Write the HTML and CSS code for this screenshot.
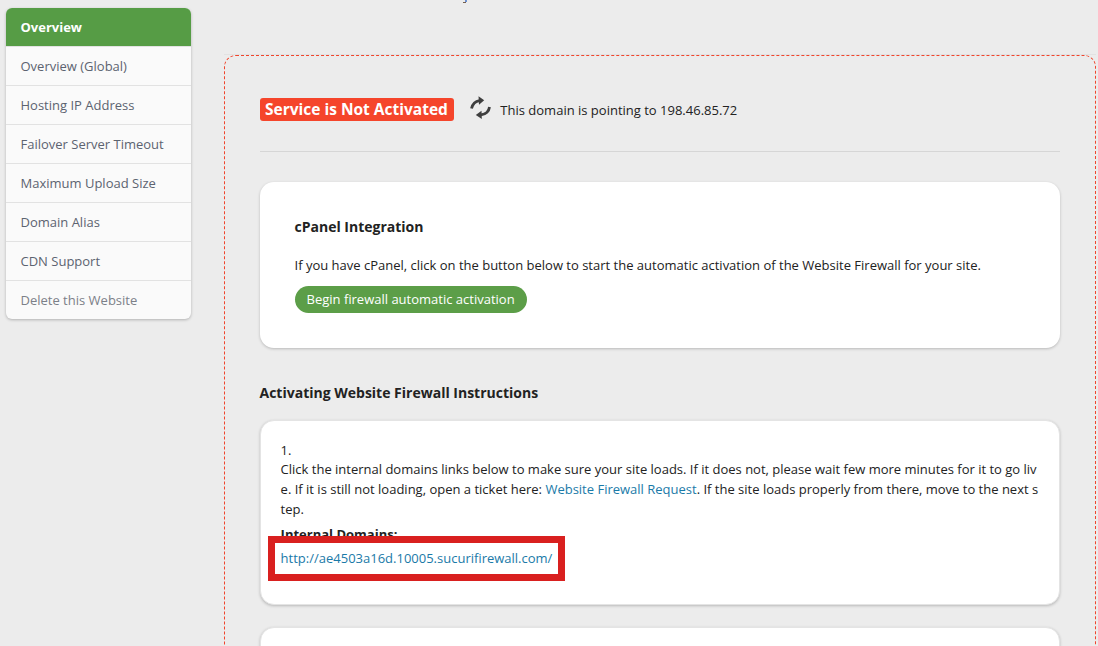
FILE: index.html
```html
<!DOCTYPE html>
<html lang="en">
<head>
<meta charset="utf-8">
<title>Website Firewall</title>
<link rel="stylesheet" href="styles.css">
</head>
<body>
<div class="page">
  <span class="clipped-mark"></span>
  <nav class="side">
    <a class="side-item active">Overview</a>
    <a class="side-item">Overview (Global)</a>
    <a class="side-item">Hosting IP Address</a>
    <a class="side-item">Failover Server Timeout</a>
    <a class="side-item">Maximum Upload Size</a>
    <a class="side-item">Domain Alias</a>
    <a class="side-item">CDN Support</a>
    <a class="side-item muted">Delete this Website</a>
  </nav>
  <main class="panel">
    <div class="status">
      <span class="badge">Service is Not Activated</span>
      <svg class="refresh" viewBox="0 0 34 34" width="34" height="34" aria-hidden="true">
        <path fill="none" stroke="#3f3f3f" stroke-width="2.8" d="M7.500 16.500C8.500 12.500 11 9.200 15.500 8.600"/>
        <path fill="#3f3f3f" d="M14.500 4.300 20.200 8.200 15 12.800z"/>
        <path fill="none" stroke="#3f3f3f" stroke-width="2.8" d="M25.500 15C25 19 22 22.400 17 22.800"/>
        <path fill="#3f3f3f" d="M11.800 23 17.500 18.800 17.800 27z"/>
      </svg>
      <span class="status-text">This domain is pointing to 198.46.85.72</span>
    </div>
    <section class="card cpanel">
      <h3 class="card-title">cPanel Integration</h3>
      <p class="card-text">If you have cPanel, click on the button below to start the automatic activation of the Website Firewall for your site.</p>
      <a class="btn">Begin firewall automatic activation</a>
    </section>
    <h3 class="section-title">Activating Website Firewall Instructions</h3>
    <section class="card step">
      <div class="step-text">1.<br>Click the internal domains links below to make sure your site loads. If it does not, please wait few more minutes for it to go live. If it is still not loading, open a ticket here: <a class="link">Website Firewall Request</a>. If the site loads properly from there, move to the next step.</div>
      <div class="step-label">Internal Domains:</div>
      <a class="link step-url">http://ae4503a16d.10005.sucurifirewall.com/</a>
      <div class="marker"></div>
    </section>
    <section class="card step next"></section>
  </main>
</div>
</body>
</html>
```
FILE: styles.css
```css
* { box-sizing: border-box; }
html, body { margin: 0; height: 100%; overflow: hidden; }
body {
  background: #ececec;
  font-family: "Open Sans", "Liberation Sans", sans-serif;
  font-size: 13px;
  color: #222;
}
.page {
  position: relative;
  display: flex;
  align-items: flex-start;
  padding: 8px 2px 0 6px;
  gap: 33px;
  width: 1098px;
}
.clipped-mark {
  position: absolute;
  left: 463px;
  top: 2px;
  width: 3px;
  height: 1px;
  background: #75604f;
}
.clipped-mark::after {
  content: "";
  position: absolute;
  left: 2px;
  top: -2px;
  width: 2px;
  height: 2px;
  background: #6d8fd0;
}
.side {
  flex: 0 0 185px;
  display: flex;
  flex-direction: column;
  background: #fafafa;
  border-radius: 6px;
  box-shadow: 0 1px 3px rgba(0,0,0,.25);
  overflow: hidden;
}
.side-item {
  height: 39px;
  line-height: 38px;
  padding-left: 14.5px;
  font-size: 13px;
  color: #5c6370;
  border-bottom: 1px solid #e2e2e2;
}
.side-item:last-child { border-bottom: 0; height: 38px; }
.side-item.active {
  background: #569c45;
  color: #fff;
  font-weight: 700;
  border-bottom-color: #e2e2e2;
}
.side-item.muted { color: #7c8088; }
.panel {
  position: relative;
  flex: 1;
  margin-top: 47px;
  height: 700px;
  border: 1px dashed #f0452c;
  border-radius: 12px;
  padding: 0 35px;
}
.panel::before {
  content: "";
  position: absolute;
  left: -1px;
  right: -1px;
  top: -2px;
  height: 1px;
  background: #e2e2e2;
}
.status {
  display: flex;
  align-items: center;
  height: 96px;
  padding-top: 13px;
  border-bottom: 1px solid #d6d6d6;
}
.badge {
  background: #f5452b;
  color: #fff;
  font-size: 15.5px;
  font-weight: 700;
  line-height: 23px;
  padding: 0 6px 0 5px;
  border-radius: 3px;
  margin-top: -2px;
}
.refresh { margin-left: 10px; margin-top: -3px; }
.status-text { margin-left: 2.5px; color: #222; }
.card {
  background: #fff;
  border-radius: 14px;
  box-shadow: 0 1px 3px rgba(0,0,0,.22);
}
.cpanel {
  margin-top: 30px;
  height: 166px;
  padding: 34px 35px 0 34.5px;
}
.card-title {
  margin: 0;
  font-size: 14px;
  line-height: 22px;
  font-weight: 700;
  color: #222;
}
.card-text { margin: 16px 0 0; line-height: 22px; }
.btn {
  display: inline-block;
  margin-top: 10px;
  height: 27px;
  line-height: 27px;
  padding: 0 12px;
  border-radius: 14px;
  background: #5c9e48;
  color: #fff;
}
.section-title {
  margin: 34px 0 16px -0.5px;
  font-size: 14px;
  line-height: 22px;
  font-weight: 700;
  color: #222;
}
.step {
  position: relative;
  height: 185px;
  border: 1px solid #e4e4e4;
  padding: 19.8px 19px 0 19.6px;
}
.step-text { line-height: 19.6px; word-break: break-all; }
.step-label { margin-top: 4.8px; font-weight: 700; line-height: 20px; }
.step-url { display: block; margin-top: 4px; line-height: 20px; }
.link { color: #1a7aa8; }
.marker {
  position: absolute;
  left: 7px;
  top: 115px;
  width: 297px;
  height: 45px;
  border: 7px solid #d9201f;
}
.next { margin-top: 22px; }
```
